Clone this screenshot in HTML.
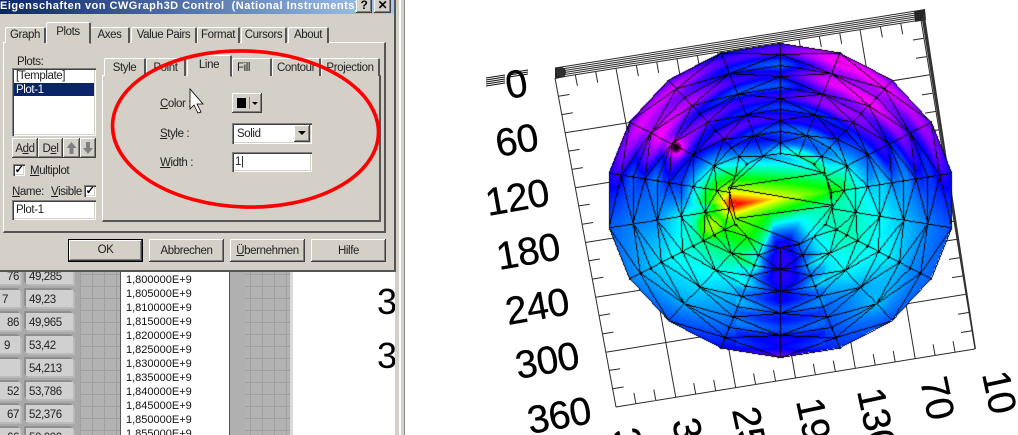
<!DOCTYPE html>
<html><head><meta charset="utf-8"><style>
html,body{margin:0;padding:0;background:#fff;overflow:hidden}
#r{position:relative;width:1018px;height:435px;overflow:hidden;background:#fff;font:11.5px/13px "Liberation Sans",sans-serif;letter-spacing:-.4px;color:#222}
#r div{position:absolute;white-space:pre;box-sizing:border-box}
.up{background:#d4d0c8;box-shadow:inset -1px -1px #404040,inset 1px 1px #fff,inset -2px -2px #808080}
.in{background:#fff;box-shadow:inset 1px 1px #808080,inset 2px 2px #404040,inset -1px -1px #fff,inset -2px -2px #d4d0c8}
.tab{background:#d4d0c8;border-top:1px solid #fff;border-left:1px solid #fff;border-right:2px solid #555;border-radius:2px 2px 0 0;text-align:center;padding-top:1px}
.btn{text-align:center;padding-top:5px}
.cell{background:#d0d0d0;box-shadow:-1px -1px #8c8c8c,-2px -2px #909090,1px 1px #bcbcbc,2px 2px #b8b8b8;padding:4px 0 0 3px}
.lt{font-size:11px;letter-spacing:0;color:#111}
u{text-decoration:underline}
text{font-family:"Liberation Sans",sans-serif;fill:#000}
</style></head><body><div id="r">

<!-- Lower LabVIEW panel -->
<div style="left:0;top:268px;width:80px;height:167px;background:#a9a9a9"></div>
<div style="left:80px;top:268px;width:40px;height:167px;background-color:#b2b2b2;background-image:linear-gradient(#9f9f9f 1px,transparent 1px),linear-gradient(90deg,#9f9f9f 1px,transparent 1px);background-size:12px 12px;background-position:0 6px"></div>
<div style="left:120px;top:268px;width:110px;height:167px;background:#fff;border-left:1px solid #555;border-right:1px solid #555"></div>
<div style="left:230px;top:268px;width:16px;height:167px;background:#b0b0b0"></div>
<div style="left:245px;top:268px;width:45px;height:167px;background-color:#b2b2b2;background-image:linear-gradient(#9f9f9f 1px,transparent 1px),linear-gradient(90deg,#9f9f9f 1px,transparent 1px);background-size:12px 12px;background-position:5px 6px"></div>
<div style="left:290px;top:268px;width:3px;height:167px;background:#d8d8d8"></div>

<div class="cell" style="left:-30px;top:267px;width:50px;height:17px;text-align:right;padding-right:1px">76</div>
<div class="cell" style="left:-30px;top:290px;width:50px;height:17px;text-align:right;padding-right:12px">7</div>
<div class="cell" style="left:-30px;top:313px;width:50px;height:17px;text-align:right;padding-right:1px">86</div>
<div class="cell" style="left:-30px;top:336px;width:50px;height:17px;text-align:right;padding-right:10px">9</div>
<div class="cell" style="left:-30px;top:359px;width:50px;height:17px"></div>
<div class="cell" style="left:-30px;top:382px;width:50px;height:17px;text-align:right;padding-right:1px">52</div>
<div class="cell" style="left:-30px;top:405px;width:50px;height:17px;text-align:right;padding-right:1px">67</div>
<div class="cell" style="left:-30px;top:428px;width:50px;height:17px;text-align:right;padding-right:1px">66</div>
<div class="cell" style="left:26px;top:267px;width:47px;height:17px">49,285</div>
<div class="cell" style="left:26px;top:290px;width:47px;height:17px">49,23</div>
<div class="cell" style="left:26px;top:313px;width:47px;height:17px">49,965</div>
<div class="cell" style="left:26px;top:336px;width:47px;height:17px">53,42</div>
<div class="cell" style="left:26px;top:359px;width:47px;height:17px">54,213</div>
<div class="cell" style="left:26px;top:382px;width:47px;height:17px">53,786</div>
<div class="cell" style="left:26px;top:405px;width:47px;height:17px">52,376</div>
<div class="cell" style="left:26px;top:428px;width:47px;height:17px">50,000</div>

<div class="lt" style="left:126px;top:274px">1,800000E+9</div>
<div class="lt" style="left:126px;top:288px">1,805000E+9</div>
<div class="lt" style="left:126px;top:302px">1,810000E+9</div>
<div class="lt" style="left:126px;top:316px">1,815000E+9</div>
<div class="lt" style="left:126px;top:330px">1,820000E+9</div>
<div class="lt" style="left:126px;top:344px">1,825000E+9</div>
<div class="lt" style="left:126px;top:358px">1,830000E+9</div>
<div class="lt" style="left:126px;top:372px">1,835000E+9</div>
<div class="lt" style="left:126px;top:386px">1,840000E+9</div>
<div class="lt" style="left:126px;top:400px">1,845000E+9</div>
<div class="lt" style="left:126px;top:414px">1,850000E+9</div>
<div class="lt" style="left:126px;top:428px">1,855000E+9</div>

<div style="left:293px;top:268px;width:103px;height:167px;overflow:hidden">
 <div style="left:84px;top:14px;font-size:36px;line-height:40px;color:#000;letter-spacing:0">3</div>
 <div style="left:84px;top:68px;font-size:36px;line-height:40px;color:#000;letter-spacing:0">3</div>
</div>

<!-- window edge strip -->
<div style="left:395px;top:0;width:10px;height:435px;background:#d4d0c8;border-right:1px solid #8a8a8a"></div>
<div style="left:399px;top:0;width:2px;height:435px;background:#fff"></div>

<!-- Dialog -->
<div style="left:0;top:0;width:396px;height:272px;background:#d4d0c8;border-right:2px solid #555;border-bottom:2px solid #555"></div>
<div style="left:0;top:0;width:394px;height:14px;background:linear-gradient(90deg,#0a246a,#a6caf0)"></div>
<div style="left:0;top:-1px;font-size:11px;line-height:14px;font-weight:bold;color:#fff;letter-spacing:.48px">Eigenschaften von CWGraph3D Control  (National Instruments)</div>
<div class="up" style="left:356px;top:-3px;width:16px;height:16px;text-align:center;font-weight:bold;font-size:12px;padding-top:2px;color:#000">?</div>
<div class="up" style="left:374px;top:-3px;width:17px;height:16px;text-align:center;font-weight:bold;font-size:12px;padding-top:2px;color:#000">✕</div>

<!-- outer tab frame -->
<div style="left:3px;top:42px;width:383px;height:191px;background:#d4d0c8;border-top:1px solid #fff;border-left:1px solid #fff;border-right:2px solid #555;border-bottom:2px solid #555"></div>
<div class="tab" style="left:5px;top:27px;width:41px;height:16px">Graph</div>
<div class="tab" style="left:90px;top:27px;width:40px;height:16px">Axes</div>
<div class="tab" style="left:131px;top:27px;width:66px;height:16px">Value Pairs</div>
<div class="tab" style="left:197px;top:27px;width:43px;height:16px">Format</div>
<div class="tab" style="left:241px;top:27px;width:46px;height:16px">Cursors</div>
<div class="tab" style="left:288px;top:27px;width:41px;height:16px">About</div>
<div class="tab" style="left:46px;top:22px;width:45px;height:22px;border-bottom:1px solid #d4d0c8;padding-top:3px">Plots</div>

<!-- inner tab frame -->
<div style="left:102px;top:75px;width:279px;height:147px;border-top:1px solid #fff;border-left:1px solid #fff;border-right:2px solid #555;border-bottom:2px solid #555"></div>
<div class="tab" style="left:104px;top:58px;width:42px;height:18px;padding-top:3px">Style</div>
<div class="tab" style="left:146px;top:58px;width:40px;height:18px;padding-top:3px">Point</div>
<div class="tab" style="left:232px;top:58px;width:40px;height:18px;text-align:left;padding:3px 0 0 4px">Fill</div>
<div class="tab" style="left:272px;top:58px;width:49px;height:18px;padding-top:3px">Contour</div>
<div class="tab" style="left:321px;top:58px;width:59px;height:18px;padding-top:3px">Projection</div>
<div class="tab" style="left:187px;top:55px;width:45px;height:22px;border-bottom:1px solid #d4d0c8;padding-top:3px">Line</div>

<!-- plots list -->
<div style="left:17px;top:56px">Plots:</div>
<div class="in" style="left:12px;top:68px;width:84px;height:68px"></div>
<div style="left:14px;top:83px;width:80px;height:13px;background:#0a246a"></div>
<div style="left:16px;top:70px">[Template]</div>
<div style="left:16px;top:84px;color:#fff">Plot-1</div>
<div class="up btn" style="left:12px;top:138px;width:26px;height:20px">A<u>d</u>d</div>
<div class="up btn" style="left:38px;top:138px;width:25px;height:20px">D<u>e</u>l</div>
<div class="up" style="left:63px;top:138px;width:17px;height:20px"></div>
<div class="up" style="left:80px;top:138px;width:16px;height:20px"></div>

<div class="in" style="left:13px;top:164px;width:12px;height:12px;font-size:11px;line-height:12px;text-align:center;font-weight:bold;color:#000">✓</div>
<div style="left:30px;top:165px"><u>M</u>ultiplot</div>
<div style="left:12px;top:186px"><u>N</u>ame:</div>
<div style="left:51px;top:186px"><u>V</u>isible</div>
<div class="in" style="left:84px;top:185px;width:12px;height:12px;font-size:11px;line-height:12px;text-align:center;font-weight:bold;color:#000">✓</div>
<div class="in" style="left:12px;top:200px;width:84px;height:20px;padding:4px 0 0 4px">Plot-1</div>

<!-- line props -->
<div style="left:160px;top:98px"><u>C</u>olor :</div>
<div style="left:160px;top:128px"><u>S</u>tyle :</div>
<div style="left:160px;top:157px"><u>W</u>idth :</div>
<div class="up" style="left:232px;top:93px;width:30px;height:20px"></div>
<div style="left:237px;top:98px;width:9px;height:10px;background:#000"></div>
<div style="left:249px;top:97px;width:1px;height:12px;background:#808080"></div>
<div style="left:252px;top:102px;width:0;height:0;border:3px solid transparent;border-top:3px solid #000"></div>
<div class="in" style="left:232px;top:123px;width:80px;height:21px;padding:5px 0 0 5px">Solid</div>
<div class="up" style="left:294px;top:125px;width:16px;height:17px"></div>
<div style="left:298px;top:131px;width:0;height:0;border:4px solid transparent;border-top:4px solid #000"></div>
<div class="in" style="left:232px;top:152px;width:80px;height:20px;padding:4px 0 0 3px">1|</div>

<!-- bottom buttons -->
<div class="up btn" style="left:68px;top:239px;width:75px;height:23px;border:1px solid #000;padding-top:4px">OK</div>
<div class="up btn" style="left:149px;top:239px;width:75px;height:23px;padding-top:6px">Abbrechen</div>
<div class="up btn" style="left:230px;top:239px;width:75px;height:23px;padding-top:6px"><u>Ü</u>bernehmen</div>
<div class="up btn" style="left:311px;top:239px;width:75px;height:23px;padding-top:6px">Hilfe</div>

<!-- Plot axes and labels -->
<svg id="g" width="1018" height="435" style="position:absolute;left:0;top:0">
 <polygon id="fb" points="780,44 840,54 895,80 935,122 950,175 950,225 935,277 895,320 840,348 780,357 720,347 667,320 627,276 606,225 606,173 627,123 667,80 720,51" fill="#0070ff"/>
 <ellipse cx="245.5" cy="129" rx="133" ry="78" fill="none" stroke="#f00" stroke-width="3.6" transform="rotate(2 245.5 129)"/>
 <path d="M190 89v20l4-4 4 8 3-1-4-8h6z" fill="#fff" stroke="#000" stroke-width=".8"/>
 <path d="M71.500 142l5 6h-3v6h-4v-6h-3z" fill="#808080"/>
 <path d="M88 154l5-6h-3v-6h-4v6h-3z" fill="#808080"/>
 <g font-size="39" stroke="#000" stroke-width=".35">
  <text transform="translate(508,99) rotate(-10)">0</text>
  <text transform="translate(498,157) rotate(-10)">60</text>
  <text transform="translate(488,216) rotate(-10)">120</text>
  <text transform="translate(499,270) rotate(-10)">180</text>
  <text transform="translate(508,325) rotate(-10)">240</text>
  <text transform="translate(518,379) rotate(-10)">300</text>
  <text transform="translate(530,434) rotate(-10)">360</text>
  <text transform="translate(982,374) rotate(78)">10</text>
  <text transform="translate(920,380) rotate(78)">70</text>
  <text transform="translate(857,391) rotate(78)">130</text>
  <text transform="translate(796,401) rotate(78)">190</text>
  <text transform="translate(732,410) rotate(78)">250</text>
  <text transform="translate(672,421) rotate(78)">310</text>
  <text transform="translate(612,431) rotate(78)">370</text>
 </g>
 <g stroke="#111" stroke-width="1" fill="none">
  <path d="M486 78l19-3M486 80l19-3M486 82l19-3M486 84l19-3M486 86l19-3M509 73l19-3M509 75l19-3M509 77l19-3"/>
 </g>
 <path d="M555 68h9l1 9-10 2z" fill="#222"/>
 <circle cx="561" cy="72" r="5" fill="#333"/>
 <path d="M914 11l11-2 1 11-11 2z" fill="#222"/>
 <path d="M922 20L924 10L976 349L975 349z" fill="#333"/>
 <g id="grid" stroke="#2a2a2a" stroke-width="1" fill="none"></g>
</svg>
<canvas id="c" width="1018" height="435" style="position:absolute;left:0;top:0"></canvas>
</div>
<script>
(function(){
var TL=[555,78],TR=[921,20],BR=[975,349],BL=[616,407];
function L(a,b,t){return [a[0]+(b[0]-a[0])*t,a[1]+(b[1]-a[1])*t]}
var d='',i,k;
function seg(p,q){d+='M'+p[0].toFixed(1)+' '+p[1].toFixed(1)+'L'+q[0].toFixed(1)+' '+q[1].toFixed(1)}
seg(TL,TR);seg(TR,BR);seg(BR,BL);seg(BL,TL);
for(i=1;i<6;i++){seg(L(TL,TR,i/6),L(BL,BR,i/6));seg(L(TL,BL,i/6),L(TR,BR,i/6))}
for(i=0;i<6;i++)for(k=1;k<3;k++){var t=(i+k/3)/6,p,u=[(BL[0]-TL[0])/329,(BL[1]-TL[1])/329],v=[(TR[0]-TL[0])/366,(TR[1]-TL[1])/366];
 p=L(TL,TR,t);seg(p,[p[0]+u[0]*11,p[1]+u[1]*11]);
 p=L(BL,BR,t);seg(p,[p[0]-u[0]*11,p[1]-u[1]*11]);
 p=L(TL,BL,t);seg(p,[p[0]+v[0]*11,p[1]+v[1]*11]);
 p=L(TR,BR,t);seg(p,[p[0]-v[0]*11,p[1]-v[1]*11]);
}
for(i=1;i<6;i++)seg([TL[0],TL[1]-2*i],[TR[0]+i*.3,TR[1]-2*i]);
var pp=document.createElementNS('http://www.w3.org/2000/svg','path');pp.setAttribute('d',d);document.getElementById('grid').appendChild(pp);

var cx=780,cy=200,A=174,B=157,N=18;
var V=[[.25,.38,.35,.33,.36,.5],[.12,.15,.2,.33,.4,.55],[.2,.13,.18,.3,.42,.58],[.22,.25,.3,.36,.48,.6],[.3,.35,.45,.5,.56,.62],[.4,.45,.5,.55,.58,.6],[.42,.46,.54,.56,.6,.58],[.4,.5,.48,.55,.55,.55],[.38,.4,.42,.48,.5,.45],[.24,.36,.38,.35,.3,.26],[.33,.42,.46,.5,.6,.65],[.4,.48,.52,.56,.62,.72],[.45,.5,.55,.58,.66,.75],[.42,.45,.46,.55,.62,.7],[.28,.38,.42,.35,.5,.7],[.22,.12,.2,.28,.33,.5],[.22,.18,.28,.28,.3,.42],[.33,.3,.36,.3,.33,.42]];
var CM=[[0,0,0,0],[.1,255,0,255],[.22,128,0,255],[.33,0,0,255],[.45,0,128,255],[.55,0,255,255],[.7,0,255,0],[.85,255,255,0],[.95,255,0,0],[1,255,255,255]];
function col(v){v=Math.max(0,Math.min(1,v));for(var i=1;i<CM.length;i++)if(v<=CM[i][0]){var a=CM[i-1],b=CM[i],t=(v-a[0])/(b[0]-a[0]);return [a[1]+(b[1]-a[1])*t,a[2]+(b[2]-a[2])*t,a[3]+(b[3]-a[3])*t]}return [255,255,255]}
function pt(j,t){var a=j*20*Math.PI/180;return [cx+A*t*Math.sin(a),cy-B*t*Math.cos(a)]}
var poly=[];for(i=0;i<N;i++)poly.push(pt(i,1));
function inside(x,y){var c=false;for(var i=0,j=N-1;i<N;j=i++){var a=poly[i],b=poly[j];if((a[1]>y)!=(b[1]>y)&&x<(b[0]-a[0])*(y-a[1])/(b[1]-a[1])+a[0])c=!c}return c}
function val(x,y){
 var dx=(x-cx)/A,dy=(y-cy)/B,t=Math.sqrt(dx*dx+dy*dy),a=Math.atan2(dx,-dy);if(a<0)a+=2*Math.PI;
 var f=a/(20*Math.PI/180),j0=Math.floor(f)%N,j1=(j0+1)%N,ft=f-Math.floor(f);
 var rr=Math.max(0,Math.min(4.999,(1-t)/.14)),r0=Math.floor(rr),fr=rr-r0;
 var v=(V[j0][r0]*(1-fr)+V[j0][r0+1]*fr)*(1-ft)+(V[j1][r0]*(1-fr)+V[j1][r0+1]*fr)*ft;
 if(y<200)v+=.05*Math.sin(t*45)*Math.min(1,(200-y)/40);
 if(y>250&&Math.abs(x-780)<45)v-=.03*Math.cos(t*50);
 // central hot wedge
 var px=733,py=204,qx=835,qy=190,ux=qx-px,uy=qy-py,s=((x-px)*ux+(y-py)*uy)/(ux*ux+uy*uy),sc=Math.max(0,Math.min(1,s));
 var ex=x-(px+ux*sc),ey=y-(py+uy*sc),e=Math.sqrt(ex*ex+ey*ey);
 var up=ey<0?0.0065:0.0085;
 v=Math.max(v,.97-.27*sc-e*up*(1+.6*(1-sc)));
 // left-lower green lobe
 var g=Math.exp(-(Math.pow(x-712,2)+Math.pow(y-225,2))/1100);v=Math.max(v,.8*g);
 // lower centre purple wedge
 var w=Math.exp(-(Math.pow((x-783)/20,2)+Math.pow((y-268)/30,2)));v=v*(1-w)+.3*w;
 // dark spot
 var h=Math.exp(-(Math.pow(x-675,2)+Math.pow(y-147,2))/70);v=v*(1-h);
 return v;
}
var cv=document.getElementById('c'),ctx=cv.getContext('2d'),im=ctx.createImageData(1018,435),D=im.data;
for(var y=40;y<360;y++)for(var x=600;x<955;x++)if(inside(x+.5,y+.5)){var c=col(val(x,y)),o=(y*1018+x)*4;D[o]=c[0];D[o+1]=c[1];D[o+2]=c[2];D[o+3]=255}
function px(x,y){x=Math.round(x);y=Math.round(y);if(x<0||y<0||x>=1018||y>=435)return;var o=(y*1018+x)*4;D[o]=D[o+1]=D[o+2]=0;D[o+3]=255}
function line(a,b){var n=Math.ceil(Math.max(Math.abs(b[0]-a[0]),Math.abs(b[1]-a[1])));for(var i=0;i<=n;i++)px(a[0]+(b[0]-a[0])*i/n,a[1]+(b[1]-a[1])*i/n)}
var F=11,IN=.3;
function node(j,k,n){return pt(j,1-(1-IN)*k/(n-1))}
for(var j=0;j<N;j++){
 line(pt(j,1),pt(j,IN));
 var e1=j%2==0,next=(j+1)%N;
 for(k=0;k<6;k++){
  var co=node(e1?next:j,k,6),fi=e1?j:next;
  for(var m=-1;m<=1;m++){var q=2*k+m;if(q>=0&&q<=10)line(co,node(fi,q,F))}
 }
 if(e1)for(k=1;k<F;k++){var n=node(j,k,F);px(n[0]+1,n[1]);px(n[0]-1,n[1]);px(n[0],n[1]+1)}
}
[[[763,156],[825,173]],[[728,187],[820,173]],[[728,187],[832,205]],[[735,218],[832,205]],[[735,218],[800,243]],[[728,187],[735,218]],[[763,156],[728,187]],[[825,173],[832,205]],[[832,205],[800,243]],[[800,243],[780,247]]].forEach(function(s){line(s[0],s[1])});
ctx.putImageData(im,0,0);
document.getElementById('fb').style.display='none';
})();
</script>
</body></html>
